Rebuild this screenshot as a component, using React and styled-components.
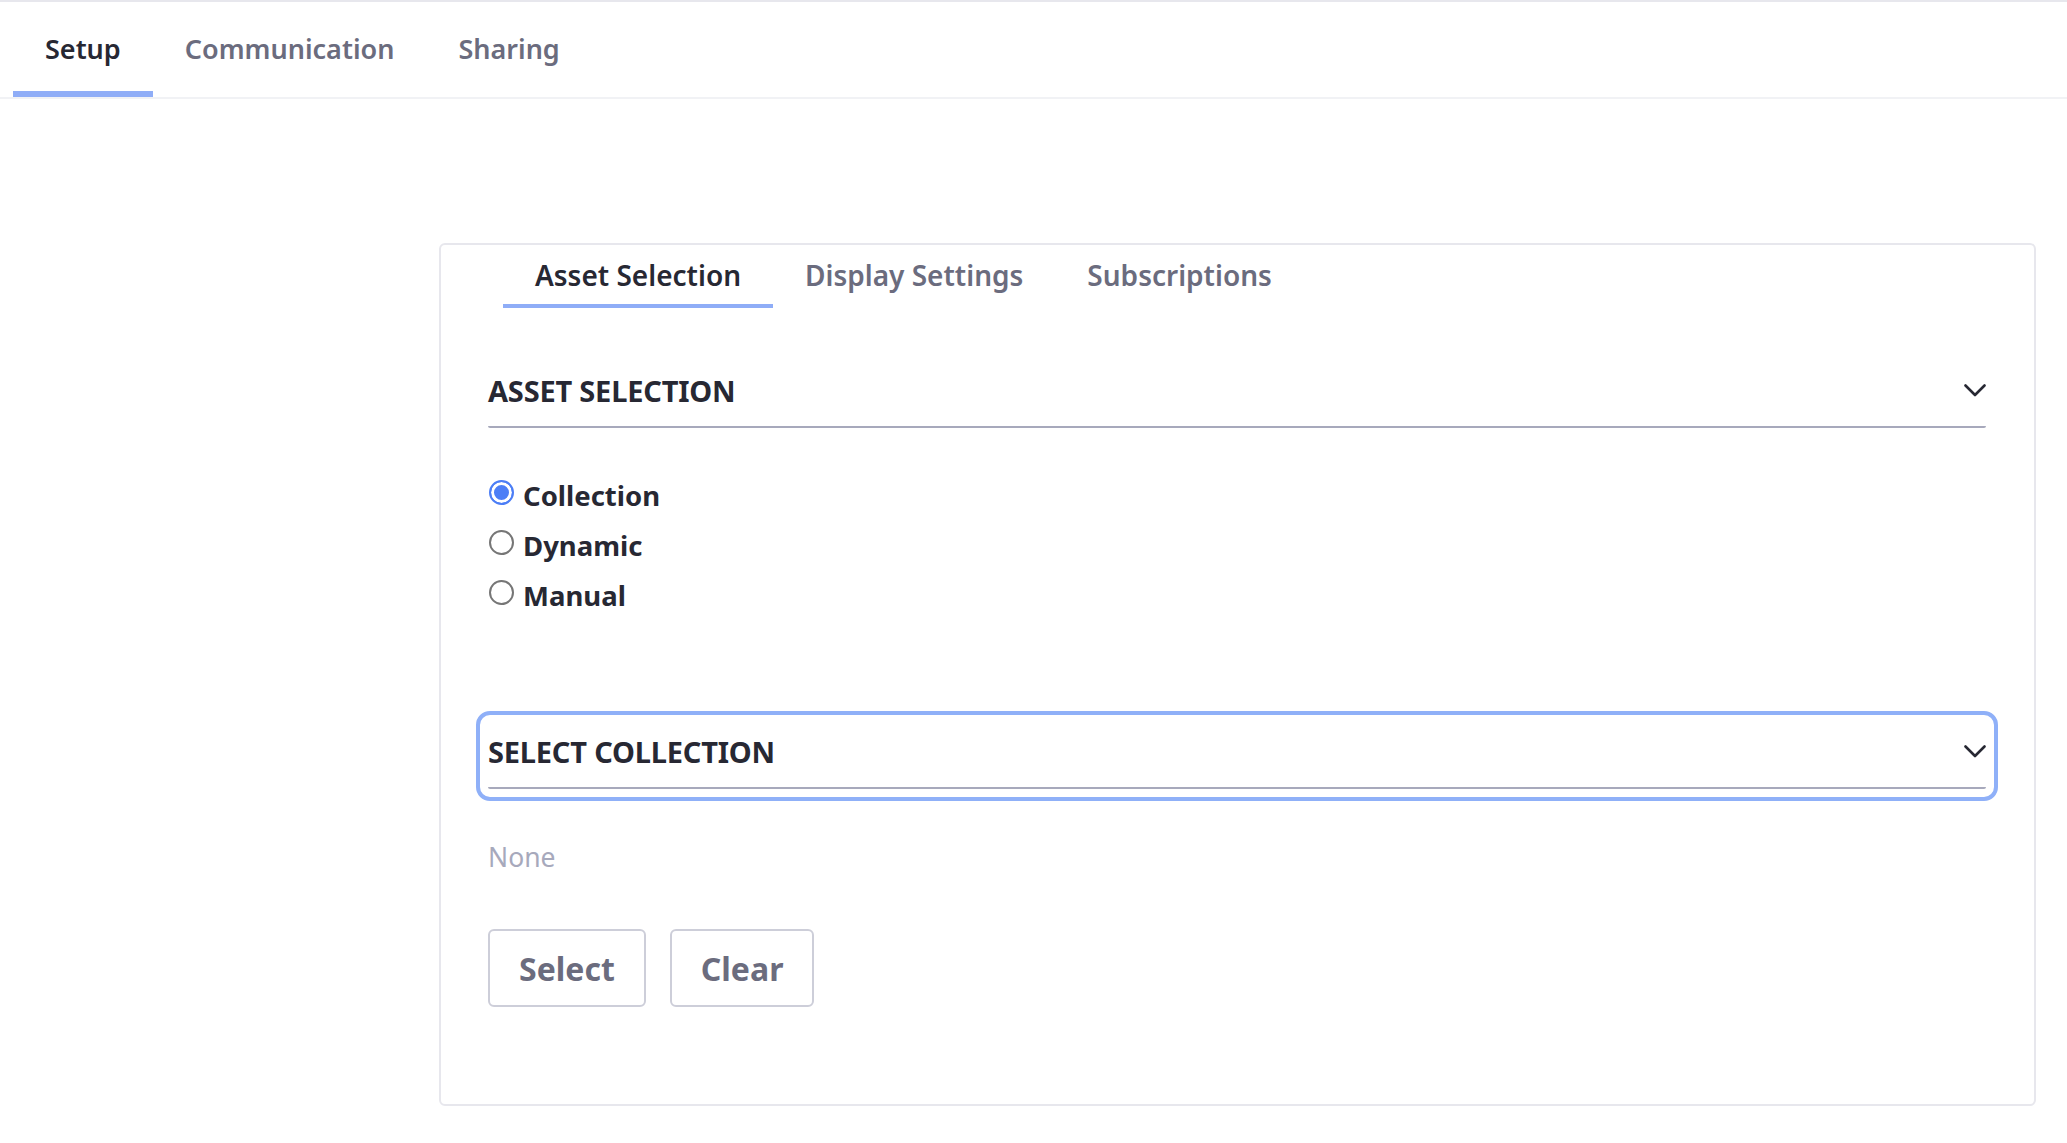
import React, { useState } from "react";
import styled, { createGlobalStyle } from "styled-components";

const GlobalStyle = createGlobalStyle`
  body {
    margin: 0;
    background: #fff;
    font-family: "Noto Sans", "Open Sans", sans-serif;
    color: #272833;
  }
`;

const Page = styled.div`
  border-top: 2px solid #e7e7ed;
  min-height: 1141px;
  box-sizing: border-box;
`;

const TopNav = styled.nav`
  display: flex;
  padding-left: 13px;
  border-bottom: 2px solid #f1f2f5;
`;

const TopTab = styled.button`
  height: 95px;
  box-sizing: border-box;
  padding: 4px 32px 0;
  background: none;
  border: none;
  border-bottom: 6px solid ${(p) => (p.$active ? "#8fadf7" : "transparent")};
  font-family: inherit;
  font-size: 27px;
  font-weight: 600;
  color: ${(p) => (p.$active ? "#272833" : "#6b6c7e")};
  cursor: pointer;
`;

const Main = styled.main`
  display: grid;
  grid-template-columns: 439px 1fr;
  padding: 144px 31px 38px 0;
`;

const Card = styled.section`
  grid-column: 2;
  border: 2px solid #e7e7ed;
  border-radius: 6px;
  padding-bottom: 97px;
`;

const InnerNav = styled.div`
  display: flex;
  padding-left: 62px;
`;

const InnerTab = styled.button`
  padding: 15px 32px 13px;
  background: none;
  border: none;
  border-bottom: 4px solid ${(p) => (p.$active ? "#8fadf7" : "transparent")};
  font-family: inherit;
  font-size: 28px;
  line-height: 31px;
  font-weight: 600;
  color: ${(p) => (p.$active ? "#272833" : "#6b6c7e")};
  cursor: pointer;
`;

const Content = styled.div`
  padding: 0 48px 0 47px;
`;

const SectionHeader = styled.div`
  display: flex;
  align-items: center;
  justify-content: space-between;
  height: 66px;
  box-sizing: border-box;
  padding-bottom: 8px;
  margin-top: ${(p) => p.$top}px;
  border-bottom: 2px solid #a7a9bc;
  border-radius: 2px;
  font-size: 29px;
  font-weight: 700;
  text-transform: uppercase;
  letter-spacing: -0.2px;
  color: #272833;
  outline: ${(p) => (p.$focused ? "4px solid #8fb0f8" : "none")};
  outline-offset: 8px;
`;

const Chevron = () => (
  <svg width="22" height="13" viewBox="0 0 22 13" fill="none">
    <path d="M1.5 1.5 L11 11 L20.5 1.5" stroke="#272833" strokeWidth="2.6" strokeLinecap="round" strokeLinejoin="round" />
  </svg>
);

const RadioGroup = styled.div`
  margin-top: 42px;
  display: flex;
  flex-direction: column;
`;

const RadioRow = styled.label`
  display: flex;
  align-items: center;
  gap: 9px;
  height: 50px;
  font-size: 27.5px;
  font-weight: 700;
  color: #272833;
  cursor: pointer;
`;

const RadioDot = styled.span`
  width: 25px;
  height: 25px;
  box-sizing: border-box;
  margin: -6px 0 0 1px;
  border-radius: 50%;
  border: 2px solid ${(p) => (p.$checked ? "#4c7ef6" : "#767676")};
  background: ${(p) => (p.$checked ? "#4c7ef6" : "#fff")};
  box-shadow: ${(p) => (p.$checked ? "inset 0 0 0 3px #fff" : "none")};
`;

const EmptyText = styled.div`
  margin-top: 52px;
  font-size: 26.5px;
  line-height: 32px;
  color: #a7a9bc;
`;

const ButtonRow = styled.div`
  display: flex;
  gap: 24px;
  margin-top: 56px;
`;

const OutlineButton = styled.button`
  height: 78px;
  padding: 0 29px;
  background: #fff;
  border: 2px solid #cdced9;
  border-radius: 6px;
  font-family: inherit;
  font-size: 32px;
  font-weight: 700;
  color: #6b6c7e;
  cursor: pointer;
`;

const topTabs = ["Setup", "Communication", "Sharing"];
const innerTabs = ["Asset Selection", "Display Settings", "Subscriptions"];
const modes = ["Collection", "Dynamic", "Manual"];

export default function App() {
  const [topTab, setTopTab] = useState(0);
  const [innerTab, setInnerTab] = useState(0);
  const [mode, setMode] = useState("Collection");

  return (
    <Page>
      <GlobalStyle />
      <TopNav>
        {topTabs.map((t, i) => (
          <TopTab key={t} $active={i === topTab} onClick={() => setTopTab(i)}>
            {t}
          </TopTab>
        ))}
      </TopNav>
      <Main>
        <Card>
          <InnerNav>
            {innerTabs.map((t, i) => (
              <InnerTab key={t} $active={i === innerTab} onClick={() => setInnerTab(i)}>
                {t}
              </InnerTab>
            ))}
          </InnerNav>
          <Content>
            <SectionHeader $top={54}>
              <span>Asset Selection</span>
              <Chevron />
            </SectionHeader>
            <RadioGroup>
              {modes.map((m) => (
                <RadioRow key={m} onClick={() => setMode(m)}>
                  <RadioDot $checked={mode === m} />
                  {m}
                </RadioRow>
              ))}
            </RadioGroup>
            <SectionHeader $top={103} $focused>
              <span>Select Collection</span>
              <Chevron />
            </SectionHeader>
            <EmptyText>None</EmptyText>
            <ButtonRow>
              <OutlineButton>Select</OutlineButton>
              <OutlineButton>Clear</OutlineButton>
            </ButtonRow>
          </Content>
        </Card>
      </Main>
    </Page>
  );
}
